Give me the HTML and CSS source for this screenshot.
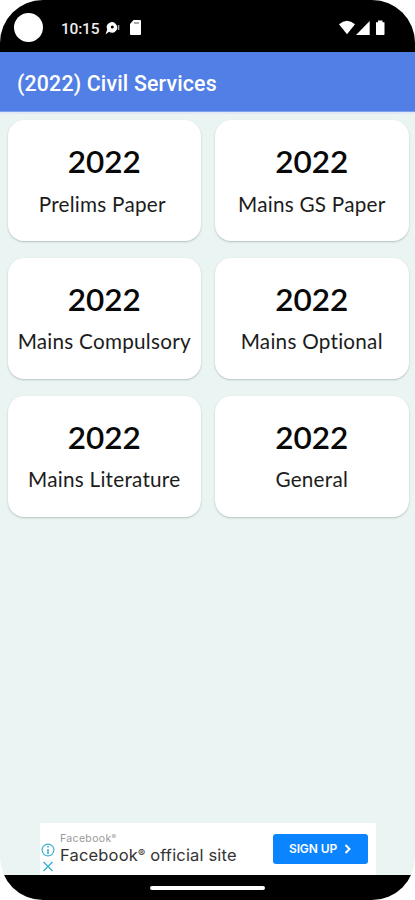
FILE: index.html
```html
<!DOCTYPE html>
<html lang="en">
<head>
<meta charset="utf-8">
<title>Civil Services</title>
<link rel="stylesheet" href="styles.css">
</head>
<body>
<div class="phone">
  <header class="status">
    <span class="camera"></span>
    <span class="time">10:15</span>
    <svg class="notify" width="16" height="16" viewBox="0 0 16 16"><path d="M.5 14.500l1.700-4.900A5.200 5.200 0 1 1 10.800 11 5.200 5.200 0 0 1 4 11.700z" fill="#fff"/><circle cx="7.3" cy="7" r="1.5" fill="#000"/><path d="M13.600 5v5" stroke="#aaa" stroke-width="1.4"/></svg>
    <svg class="sd" width="11" height="15" viewBox="0 0 11 15"><path d="M3.5 0H10q1 0 1 1v13q0 1-1 1H1q-1 0-1-1V4z" fill="#fff"/><path d="M4 3h5" stroke="#555" stroke-width="1.2"/></svg>
    <svg class="signals" width="48" height="16" viewBox="0 0 48 16"><path d="M0 4.300Q8 -2.800 16 4.300L8 14.200z" fill="#fff"/><path d="M30.700 1v14H17z" fill="#fff"/><path d="M37 2.300h2V.5h4.500v1.800h2v12q0 .7-.7.7h-7.100q-.7 0-.7-.7z" fill="#fff"/></svg>
  </header>
  <h1 class="appbar"><span>(2022) Civil Services</span></h1>
  <main class="grid">
    <article class="card"><h2>2022</h2><p class="trailing">Prelims Paper</p></article>
    <article class="card"><h2>2022</h2><p>Mains GS Paper</p></article>
    <article class="card"><h2>2022</h2><p>Mains Compulsory</p></article>
    <article class="card"><h2>2022</h2><p>Mains Optional</p></article>
    <article class="card"><h2>2022</h2><p>Mains Literature</p></article>
    <article class="card"><h2>2022</h2><p>General</p></article>
  </main>
  <aside class="ad">
    <div class="marks">
      <svg width="14" height="14" viewBox="0 0 14 14" fill="none" stroke="#42b2d2"><circle cx="7" cy="7" r="5.9" stroke-width="1.2"/><path d="M7 3v1.600M7 6v5" stroke-width="1.6"/></svg>
      <svg width="14" height="11" viewBox="0 0 14 11" fill="none" stroke="#42b2d2" stroke-width="1.5"><path d="M2.500 1l9 9M11.500 1l-9 9"/></svg>
    </div>
    <div class="copy"><span class="brand">Facebook<sup>®</sup></span><span class="title">Facebook<sup>®</sup> official site</span></div>
    <div class="button"><span>SIGN UP</span><svg width="8" height="10" viewBox="0 0 8 10"><path d="M1.500 1l4 4-4 4" fill="none" stroke="#fff" stroke-width="2"/></svg></div>
  </aside>
  <footer class="nav"><span></span></footer>
</div>
</body>
</html>
```
FILE: styles.css
```css
* { box-sizing: border-box; }
body { margin: 0; background: #fff; }
.phone {
  width: 415px; height: 900px; overflow: hidden;
  display: flex; flex-direction: column;
  background: #eaf4f3;
  border-radius: 43px;
}
.status {
  height: 52px; flex: none; background: #000;
  display: flex; align-items: center;
  padding: 3px 28px 0 14px;
}
.camera { width: 29px; height: 29px; border-radius: 50%; background: #fff; }
.time { margin: 2px 0 0 18px; width: 38px; font: 500 15.5px/20px Roboto, sans-serif; color: #eee; letter-spacing: -.2px; white-space: nowrap; }
.notify { margin-left: 6px; }
.sd { margin-left: 9px; }
.signals { margin-left: auto; }
.appbar {
  height: 60px; flex: none; margin: 0; padding: 4px 17px 0;
  display: flex; align-items: center;
  background: #527fe5; color: #fff;
  border-bottom: 1px solid #7ba0ec;
  font: 500 21.3px/28px Roboto, sans-serif; letter-spacing: .18px;
}
.grid {
  flex: 1; display: grid; align-content: start;
  grid-template-columns: 193.5px 193.5px; grid-auto-rows: 121px;
  gap: 16.7px 14px; padding: 6.200px 7.500px 0;
  border-top: 2px solid #e0e9f5;
}
.card {
  background: #fff; border-radius: 16px; text-align: center;
  box-shadow: 0 1px 2px rgba(0, 30, 25, .23);
  padding-top: 21px; color: #080808; white-space: nowrap;
}
.card h2 { margin: 0; font: 600 31.5px/40px Lato, sans-serif; }
.card p { margin: 7.500px -8px 0; color: #1c1c1c; font: 400 20.7px/30px Lato, sans-serif; letter-spacing: .25px; }
.card .trailing { padding-right: 4px; }
.ad {
  width: 336px; height: 52px; flex: none; margin-left: 40px;
  background: #fff; display: flex;
}
.marks { width: 15px; padding: 20px 0 0 1px; display: flex; flex-direction: column; gap: 4px; }
.marks svg { display: block; }
.copy { width: 217px; padding: 9px 0 0 5px; display: flex; flex-direction: column; font-family: Inter, sans-serif; white-space: nowrap; }
.copy sup { font-size: .65em; line-height: 0; vertical-align: .38em; }
.brand { font-size: 10.5px; line-height: 14px; color: #999; letter-spacing: .35px; }
.title { font-size: 16.5px; line-height: 18px; color: #333; letter-spacing: .17px; }
.button {
  width: 95px; height: 30px; margin: 11px 0 0 1px; border-radius: 3px;
  display: flex; align-items: center; justify-content: center; gap: 7px;
  background: #0a84ff; color: #fff; font: 600 12px/16px Inter, sans-serif; letter-spacing: -.1px;
}
.nav { height: 25px; flex: none; background: #000; display: flex; justify-content: center; align-items: center; }
.nav span { width: 115px; height: 4px; background: #fff; border-radius: 2px; }
```
